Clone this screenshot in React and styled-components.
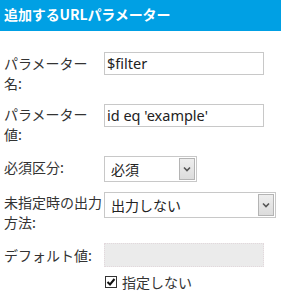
import React from "react";
import styled, { createGlobalStyle } from "styled-components";

const Global = createGlobalStyle`
  html, body { margin: 0; padding: 0; background: #fff; }
  body { font-family: "Noto Sans CJK JP", "Noto Sans", sans-serif; }
`;

const Panel = styled.div`
  width: 281px;
  height: 293px;
  overflow: hidden;
  background: #fff;
`;

const Header = styled.div`
  height: 31px;
  box-sizing: border-box;
  background: #00a0e4;
  color: #fff;
  font-weight: bold;
  font-size: 14px;
  line-height: 20px;
  padding: 4px 0 0 4px;
  letter-spacing: -0.1px;
`;

const Form = styled.div`
  display: flex;
  flex-direction: column;
  padding-left: 4px;
`;

const Row = styled.div`
  display: flex;
  align-items: ${(p) => (p.$center ? "center" : "flex-start")};
  margin-top: ${(p) => p.$gap}px;
`;

const Label = styled.div`
  width: 100px;
  flex: none;
  font-size: 14px;
  line-height: 20px;
  color: #333;
  padding-top: ${(p) => p.$pt || 0}px;
`;

const TextInput = styled.div`
  box-sizing: border-box;
  width: 160px;
  height: 23px;
  border: 1px solid #c8c8c8;
  font-family: "Noto Sans", "Noto Sans CJK JP", sans-serif;
  font-size: 14.5px;
  line-height: 20px;
  color: #222;
  padding-left: 2px;
  white-space: nowrap;
`;

const Disabled = styled.div`
  box-sizing: border-box;
  width: 160px;
  height: 24px;
  background: #ebebeb;
  border: 1px dotted #e2d8dc;
`;

const Select = styled.div`
  box-sizing: border-box;
  width: ${(p) => p.$w}px;
  height: 26px;
  border: 1px solid #c8c8c8;
  display: flex;
  align-items: stretch;
  background: #fff;
`;

const SelectText = styled.div`
  flex: 1;
  font-size: 14px;
  line-height: 24px;
  color: #222;
  padding-left: 6px;
`;

const Arrow = styled.div`
  width: 16px;
  margin: 1px;
  box-sizing: border-box;
  border: 1px solid #b4b4b4;
  background: linear-gradient(#eeeeee, #dcdcdc);
  display: flex;
  align-items: center;
  justify-content: center;
`;

const CheckRow = styled.label`
  display: flex;
  align-items: center;
  margin-top: 5px;
  margin-left: 101px;
  font-size: 14px;
  line-height: 20px;
  color: #333;
  gap: 5px;
`;

const Box = styled.span`
  box-sizing: border-box;
  width: 12px;
  height: 12px;
  border: 1px solid #333;
  background: #fff;
  display: flex;
  align-items: center;
  justify-content: center;
`;

const Chevron = () => (
  <svg width="8" height="6" viewBox="0 0 8 6">
    <path d="M1 1.5 L4 4.5 L7 1.5" fill="none" stroke="#555" strokeWidth="1.6" />
  </svg>
);

export default function App() {
  return (
    <Panel>
      <Global />
      <Header>追加するURLパラメーター</Header>
      <Form>
        <Row $gap={21}>
          <Label $pt={1}>パラメーター名:</Label>
          <TextInput>$filter</TextInput>
        </Row>
        <Row $gap={11}>
          <Label $pt={0}>パラメーター値:</Label>
          <TextInput>id eq 'example'</TextInput>
        </Row>
        <Row $gap={12}>
          <Label $pt={1}>必須区分:</Label>
          <Select $w={93}>
            <SelectText>必須</SelectText>
            <Arrow><Chevron /></Arrow>
          </Select>
        </Row>
        <Row $gap={10}>
          <Label>未指定時の出力方法:</Label>
          <Select $w={172}>
            <SelectText>出力しない</SelectText>
            <Arrow><Chevron /></Arrow>
          </Select>
        </Row>
        <Row $gap={11} $center>
          <Label>デフォルト値:</Label>
          <Disabled />
        </Row>
        <CheckRow>
          <Box>
            <svg width="10" height="10" viewBox="0 0 10 10">
              <path d="M1.5 5 L4 7.5 L8.5 2" fill="none" stroke="#111" strokeWidth="2" />
            </svg>
          </Box>
          指定しない
        </CheckRow>
      </Form>
    </Panel>
  );
}
